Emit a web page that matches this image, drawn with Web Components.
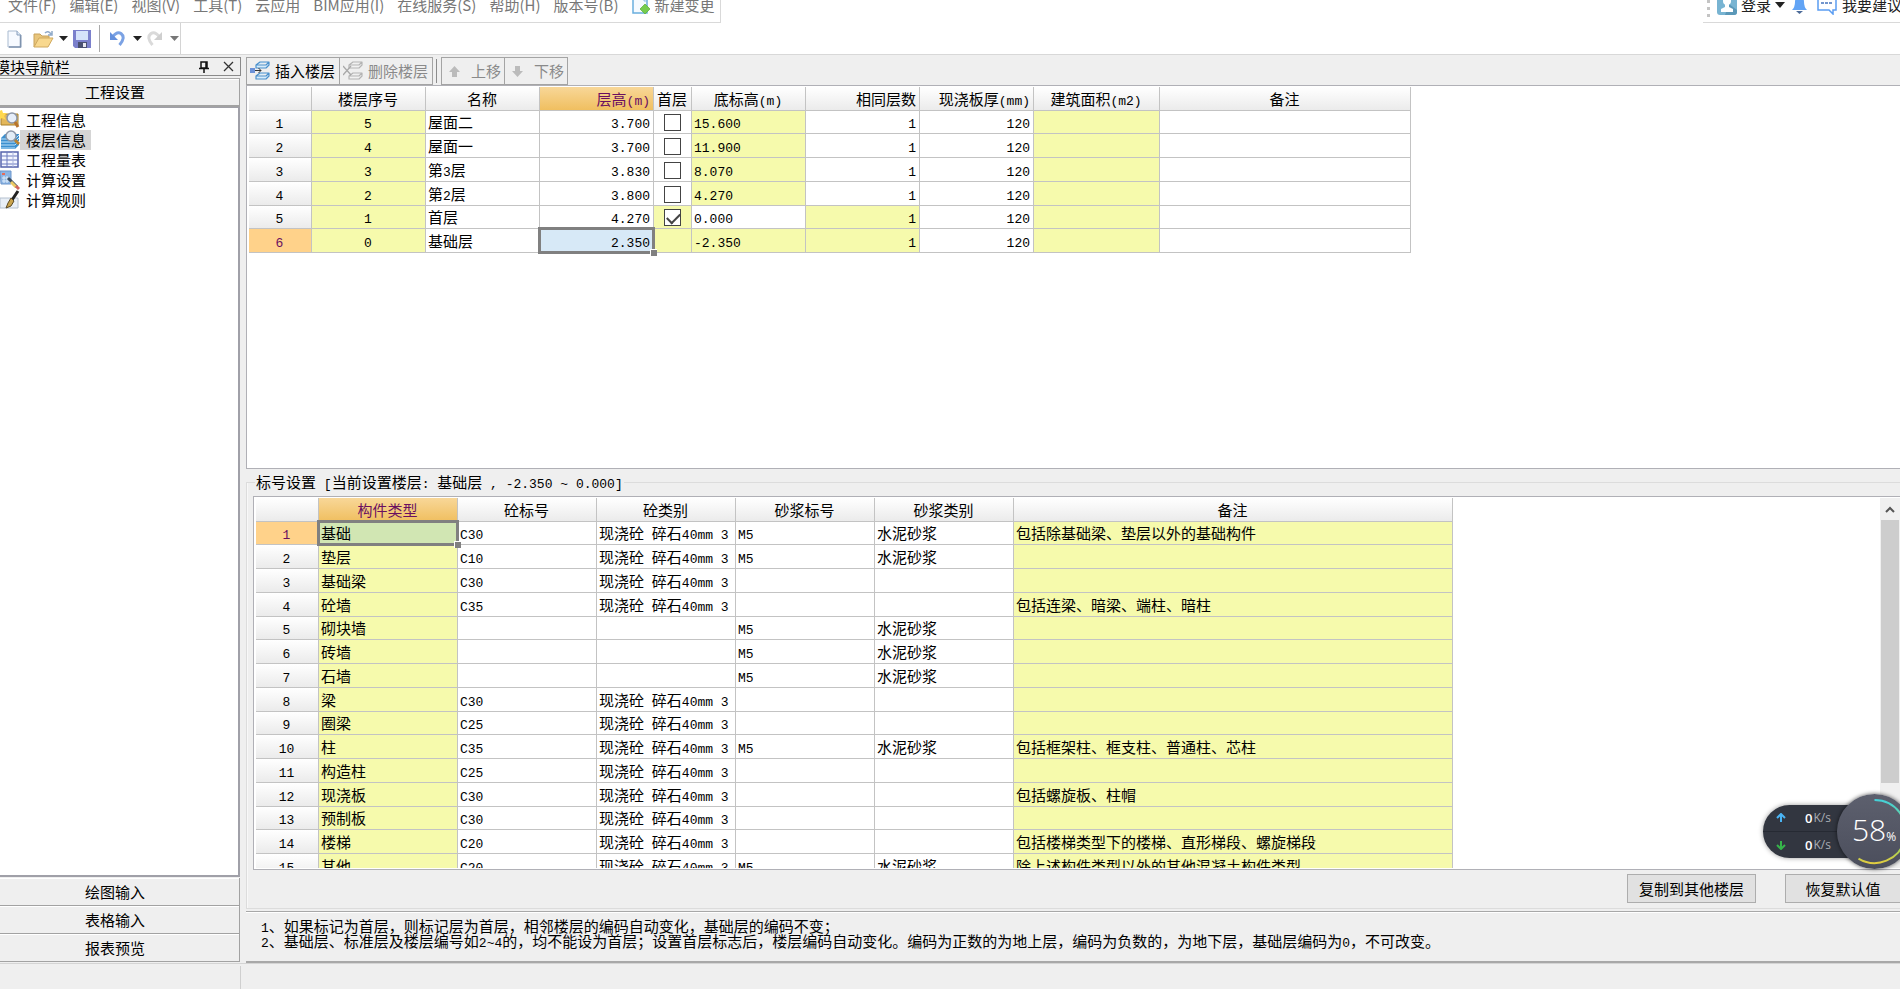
<!DOCTYPE html>
<html lang="zh-CN">
<head>
<meta charset="utf-8">
<title>楼层信息</title>
<style>
  html, body { margin: 0; height: 100%; }
  body {
    overflow: hidden; color: #000; background: #fff;
    font: 15px/20px "Noto Sans CJK SC", sans-serif;
  }
</style>
</head>
<body>
<app-window>
  <menu-bar slot="menu"></menu-bar>
  <quick-bar slot="quick"></quick-bar>
  <nav-panel slot="nav" heading="模块导航栏"></nav-panel>
  <floor-toolbar slot="tools"></floor-toolbar>
  <data-grid slot="floors" name="floors"></data-grid>
  <grade-panel slot="grades"><data-grid name="grades"></data-grid></grade-panel>
  <note-bar slot="notes">1、如果标记为首层，则标记层为首层，相邻楼层的编码自动变化，基础层的编码不变；
2、基础层、标准层及楼层编号如2~4的，均不能设为首层；设置首层标志后，楼层编码自动变化。编码为正数的为地上层，编码为负数的，为地下层，基础层编码为0，不可改变。</note-bar>
</app-window>
<net-monitor></net-monitor>

<script>
const ASCII = /[\x20-\x7e]+/g;
const mono = t => t.replace(ASCII, m => `<span class="n">${m}</span>`);
const BASE = `*{box-sizing:border-box}
  button{font:inherit;color:inherit;margin:0;padding:0;border:0;background:none;white-space:nowrap}
  svg{display:block;flex:none}
  .n{font-family:"Liberation Mono",monospace;font-size:13px;line-height:1;white-space:pre}`;

function define(name, render, after) {
  customElements.define(name, class extends HTMLElement {
    connectedCallback() {
      if (this.shadowRoot) return;
      const t = document.createElement('template');
      t.innerHTML = render(this);
      const root = this.attachShadow({ mode: 'open' });
      root.append(t.content.cloneNode(true));
      if (after) after(root, this);
    }
  });
}

define('app-window', () => `<style>${BASE}
  :host{display:flex;flex-direction:column;height:100vh;overflow:hidden}
  .body{flex:1;min-height:0;display:grid;grid-template-columns:241px minmax(0,1fr);column-gap:5px;background:#efefef;border-top:1px solid #d8d8d8;padding-top:2px}
  .work{display:grid;min-height:0;grid-template-rows:28px minmax(0,384fr) minmax(0,442fr) 52px}
  .status{height:26px;background:#efefef;border-top:1px solid #d4d4d4;display:flex;padding-left:240px}
  .status i{border-left:1px solid #cfcfcf;height:24px;margin-top:2px}
  </style>
  <slot name="menu"></slot><slot name="quick"></slot>
  <div class="body"><slot name="nav"></slot>
    <main class="work"><slot name="tools"></slot><slot name="floors"></slot><slot name="grades"></slot><slot name="notes"></slot></main>
  </div>
  <footer class="status"><i></i></footer>`);

define('menu-bar', () => `<style>${BASE}
  :host{display:flex;justify-content:space-between;height:23px}
  nav{display:flex;gap:13px;padding:0 7px 0 8px;border:1px solid #d9d9d9;border-width:0 1px 1px 0;color:#777;width:721px}
  button{height:20px;margin-top:-5px;display:flex;align-items:center}
  .new{gap:3px;margin-left:auto}
  .user{width:197px;padding-left:4px;border-bottom:1px solid #d9d9d9;display:flex;color:#222}
  .user button{flex:none}
  .grip{flex:none;border-left:3px dotted #c4c4c4;height:17px;margin-right:7px}
  .login{gap:4px}.bell{padding:0 9px 0 6px}.talk{gap:5px}
  </style>
  <nav>${['文件(F)','编辑(E)','视图(V)','工具(T)','云应用','BIM应用(I)','在线服务(S)','帮助(H)','版本号(B)'].map(x => `<button>${x}</button>`).join('')}
  <button class="new"><svg width="20" height="20" viewBox="0 0 20 20"><path d="M2 1h11l3 3v14H2z" fill="#f5faff" stroke="#6aaede" stroke-width="1.5"/><path d="M11 3h2v3h3" stroke="#8abde6" fill="none"/><path d="M14 9l5 5-5 5-5-5z" fill="#76cc4e" stroke="#5aae38" stroke-width=".7"/></svg>新建变更</button></nav>
  <div class="user"><i class="grip"></i>
  <button class="login"><svg width="20" height="20" viewBox="0 0 20 20"><rect width="20" height="20" rx="3" fill="#78b4d2"/><path d="M12 9l8 6v2q0 3-3 3H8z" fill="#5b98b8"/><circle cx="10" cy="6" r="4" fill="#fff"/><path d="M8 9h4v3l4 2v3H4v-3l4-2z" fill="#fff"/></svg>登录<svg width="10" height="6"><path d="M0 0h10L5 6z" fill="#222"/></svg></button>
  <button class="bell" aria-label="通知"><svg width="17" height="20" viewBox="0 0 17 20"><path d="M1 15q3-3 3-8c0-8 9-8 9 0q0 5 3 8z" fill="#62a4f5"/><path d="M5 16h7l-3.500 3z" fill="#4d6b98"/></svg></button>
  <button class="talk"><svg width="20" height="20" viewBox="0 0 20 20"><path d="M1 1h18v14h-3v4l-4-4H1z" fill="#fff" stroke="#5b9df2" stroke-width="1.500"/><path d="M4 8h12" stroke="#4674bd" stroke-width="1.500" stroke-dasharray="3 1"/></svg>我要建议</button></div>`);

const caret = c => `<svg width="9" height="6"><path d="M0 0h9L4.500 5z" fill="${c}"/></svg>`;
define('quick-bar', () => `<style>${BASE}
  :host{display:block;height:31px}
  div{display:flex;align-items:center;width:181px;height:31px;padding-left:7px;border-right:1px solid #d4d4d4}
  button{display:flex;align-items:center}
  .open{gap:5px;margin:0 5px 0 11px}.undo{gap:7px}.redo{gap:7px;margin-left:4px}
  i{height:27px;border-left:1px solid #aaa;margin:0 9px 0 8px}
  </style><div>
  <button aria-label="新建"><svg width="15" height="18" viewBox="0 0 15 18"><path d="M1 1h9l4 4v12H1z" fill="#f7faff" stroke="#a9bad0"/><path d="M13.500 5v12H2" stroke="#7f93ae" stroke-width="1.500" fill="none"/><path d="M10 1v4h4" fill="#dce7f4" stroke="#8aa0bd"/></svg></button>
  <button class="open" aria-label="打开"><svg width="21" height="18" viewBox="0 0 21 18"><path d="M1 17V4h6l2 2h7v5" fill="#e8c57b" stroke="#c8a25a"/><path d="M1 17L6 8h14l-5 9z" fill="#f8d88e" stroke="#d0a95e"/><path d="M12 3q3-3 6 1M19 1v4h-4" stroke="#8fa9c8" stroke-width="1.500" fill="none"/></svg>${caret('#222')}</button>
  <button aria-label="保存"><svg width="18" height="18" viewBox="0 0 18 18"><path d="M0 0h18v18H2l-2-2z" fill="#7b80cc"/><path d="M3 1h12v9H3z" fill="#d5e2fa"/><path d="M5 12h9v6H5z" fill="#4a5070"/><path d="M10 13h3v4h-3z" fill="#e8e8f0"/></svg></button><i></i>
  <button class="undo" aria-label="撤销"><svg width="17" height="17" viewBox="0 0 17 17"><path d="M3.500 7Q8 1 12 3.500q5 4-1.500 11.500" fill="none" stroke="#7ba2e4" stroke-width="3"/><path d="M1 2v8h8z" fill="#6590dc"/></svg>${caret('#222')}</button>
  <button class="redo" aria-label="重做"><svg width="17" height="17" viewBox="0 0 17 17"><path d="M13.500 7Q9 1 5 3.500q-5 4 1.500 11.500" fill="none" stroke="#dadada" stroke-width="3"/><path d="M16 2v8H8z" fill="#cfcfcf"/></svg>${caret('#777')}</button></div>`);

const NAV = [
  ['工程信息', '<path d="M1 4h17v11H1z" fill="#e3b75a" stroke="#a8802c"/><path d="M2 0l1 3 4 0-3 3 2 4-4-2-3 2V1z" fill="#ffd84e"/><circle cx="12" cy="8" r="5" fill="#e6eefa" stroke="#8c96a8" stroke-width="1.500"/><path d="M15 12l3 5" stroke="#b8742c" stroke-width="3"/>'],
  ['楼层信息', '<path d="M1 8l4-4h14v11l-4 4H1z" fill="#3b8fcf"/><path d="M1 9h14l4-4M1 12h14l4-4M1 15h14l4-4M1 18h14" stroke="#bfe2fa" fill="none"/><circle cx="11" cy="6" r="5" fill="#e3edf7" stroke="#8c96a8" stroke-width="1.500"/><path d="M15 10l4 4" stroke="#b98232" stroke-width="3"/>'],
  ['工程量表', '<path d="M1 2h17v15H1z" fill="#f4f6ff" stroke="#5563ac" stroke-width="1.500"/><path d="M1 6h17M1 10h17M1 14h17M7 2v15" stroke="#6a78bd"/><path d="M13 2v15" stroke="#a9b3dd"/>'],
  ['计算设置', '<path d="M0 1h11v13H1z" fill="#8cb5e4" stroke="#6d96cc"/><path d="M2 3h3v2H2z" fill="#e86b58"/><path d="M2 8h8M2 11h8M4 6v7M7 6v7" stroke="#dcebfa"/><path d="M8 8l9 9" stroke="#3d4d60" stroke-width="3"/><path d="M11 12l5 5" stroke="#ecc964" stroke-width="3"/><path d="M16 16l3 3" stroke="#d0655d" stroke-width="3"/>'],
  ['计算规则', '<path d="M0 8h18v10H0z" fill="#e9eff6" stroke="#b4c0ce"/><path d="M18 1l-6 9" stroke="#222" stroke-width="3"/><path d="M11 8l3 3-3 5-5 2 2-5z" fill="#c9a34c" stroke="#5b4a26"/>']
];
define('nav-panel', el => `<style>${BASE}
  :host{display:flex;flex-direction:column;min-height:0;overflow:hidden;padding-bottom:1px}
  header{height:19px;flex:none;display:flex;align-items:center;border:1px solid #8a8a8a;border-left:0;line-height:17px}
  header span{margin-left:-5px;flex:1}
  header button{margin-right:5px}header button+button{margin:0 5px 0 9px}
  .sec{display:block;flex:none;width:240px;height:28px;padding-right:9px;border:solid #a2a2a2;border-width:0 1px 1px 0;text-align:center;box-shadow:inset 0 1px #fff}
  .top{height:29px;margin-top:2px;border-bottom-width:2px;border-top:1px solid #aaa}
  ul{flex:1;min-height:0;width:240px;margin:0 0 1px;padding:2px 0 0;list-style:none;background:#fff;border:solid #a0a0a8;border-width:1px 2px 2px 0}
  li{height:20px}
  li button{display:flex;align-items:center;height:20px}
  li span{padding:0 5px 0 6px;line-height:20px}
  .on span{background:#d5d5d5}
  </style>
  <header><span>${el.getAttribute('heading')}</span>
  <button aria-label="固定"><svg width="10" height="14"><path d="M2 2h6v6H2zM0 8.500h10M5 9v4M7 2v6" fill="none" stroke="#111" stroke-width="1.500"/></svg></button>
  <button aria-label="关闭"><svg width="12" height="12"><path d="M1 1l9 9M10 1l-9 9" stroke="#333" stroke-width="1.300"/></svg></button></header>
  <button class="sec top">工程设置</button>
  <ul>${NAV.map(([t, p], i) => `<li><button class="${i === 1 ? 'on' : ''}"><svg width="20" height="20" viewBox="0 0 20 20">${p}</svg><span>${t}</span></button></li>`).join('')}</ul>
  ${['绘图输入','表格输入','报表预览'].map(t => `<button class="sec">${t}</button>`).join('')}`);

const layers = (c, f, x) => `<svg width="20" height="20" viewBox="0 0 20 20"><g fill="none" stroke="${c}" stroke-width="1.200" stroke-linejoin="round"><path d="M6 4l4-3h9l-3 3zM6 4v3h10l3-3V1" fill="${f}"/><path d="M6 15l4-3h9l-3 3zM6 15v3h10l3-3v-3" fill="${f}"/></g>${x}</svg>`;
define('floor-toolbar', () => `<style>${BASE}
  :host{display:flex;align-items:flex-start;height:28px}
  button{height:28px;display:flex;align-items:center;border:1px solid #a4a4a4;padding:0 3px 0 3px}
  button+button{margin-left:-1px}
  button:disabled{color:#8a8a8a}
  .w{gap:5px;width:94px}.m{justify-content:space-between;width:64px;padding-left:6px}
  i{border-left:1px solid #8c8c8c;height:24px;margin:2px 4px 0 3px}
  </style>
  <button class="w">${layers('#4a90cc', '#d6ecfb', '<path d="M0 7h5v5H0z" fill="#6c92d8"/><path d="M5 9.500h6M8.500 7l2.500 2.500L8.500 12" stroke="#333" fill="none"/>')}插入楼层</button>
  <button class="w" disabled>${layers('#b4b4b4', '#f2f2f2', '<path d="M0 5l8 9M8 5l-8 9" stroke="#a8a8a8" stroke-width="1.300"/>')}删除楼层</button><i></i>
  <button class="m" disabled><svg width="13" height="13"><path d="M6.500 1l5.500 6H9v5H4V7H1z" fill="#bbb"/></svg>上移</button>
  <button class="m" disabled><svg width="13" height="13"><path d="M6.500 12L12 6H9V1H4v5H1z" fill="#bbb"/></svg>下移</button>`);

/* Column: [title, width, alignment, header alignment]. A cell starting with "*" is read-only (yellow). */
const MIX = '现浇砼 碎石40mm 3', MORTAR = '水泥砂浆';
const GRIDS = {
  floors: {
    label: '楼层信息', hot: [5, 2],
    cols: [['楼层序号',114,'c'],['名称',114,'l'],['层高(m)',114,'r','r'],['首层',38,'c'],['底标高(m)',114,'l'],['相同层数',114,'r','r'],['现浇板厚(mm)',114,'r','r'],['建筑面积(m2)',126,'l'],['备注',251,'l']],
    rows: [
      ['*5','屋面二','3.700','[ ]','*15.600','1','120','*',''],
      ['*4','屋面一','3.700','[ ]','*11.900','1','120','*',''],
      ['*3','第3层','3.830','[ ]','*8.070','1','120','*',''],
      ['*2','第2层','3.800','[ ]','*4.270','1','120','*',''],
      ['*1','首层','4.270','*[x]','0.000','*1','120','*',''],
      ['*0','基础层','2.350','*','*-2.350','*1','120','*','']
    ]
  },
  grades: {
    label: '标号设置', hot: [0, 0], scroll: true,
    cols: [['构件类型',139,'l'],['砼标号',139,'l'],['砼类别',139,'l'],['砂浆标号',139,'l'],['砂浆类别',139,'l'],['备注',439,'l']],
    rows: [
      ['基础','C30',1,1,'包括除基础梁、垫层以外的基础构件'],['垫层','C10',1,1,''],['基础梁','C30',1,0,''],
      ['砼墙','C35',1,0,'包括连梁、暗梁、端柱、暗柱'],['砌块墙','',0,1,''],['砖墙','',0,1,''],['石墙','',0,1,''],
      ['梁','C30',1,0,''],['圈梁','C25',1,0,''],['柱','C35',1,1,'包括框架柱、框支柱、普通柱、芯柱'],
      ['构造柱','C25',1,0,''],['现浇板','C30',1,0,'包括螺旋板、柱帽'],['预制板','C30',1,0,''],
      ['楼梯','C20',1,0,'包括楼梯类型下的楼梯、直形梯段、螺旋梯段'],['其他','C20',1,1,'除上述构件类型以外的其他混凝土构件类型']
    ].map(([n, g, a, b, r]) => ['*' + n, g, a ? MIX : '', b ? 'M5' : '', b ? MORTAR : '', '*' + r])
  }
};
define('data-grid', el => {
  const g = GRIDS[el.getAttribute('name')], [hr, hc] = g.hot;
  const cell = (v, r, c) => {
    const ro = v[0] === '*', t = ro ? v.slice(1) : v;
    const cls = [g.cols[c][2], ro ? 'ro' : '', r === hr && c === hc ? 'sel' : ''].join(' ');
    const body = /^\[.\]$/.test(t) ? `<input type="checkbox" aria-label="首层 ${r + 1}"${t === '[x]' ? ' checked' : ''}>` : mono(t);
    return `<td class="${cls}">${body}</td>`;
  };
  const width = g.cols.reduce((s, c) => s + c[1], 63);
  return `<style>${BASE}
  :host{display:flex;min-height:0;min-width:0;background:#fff;border:solid #b0b0b6;border-width:1px 0 1px 1px;padding:1px 0 1px 2px}
  .view{flex:1;min-width:0;overflow:hidden}
  table{border-collapse:separate;border-spacing:0;table-layout:fixed;width:${width}px}
  th,td{padding:0 3px 0 2px;height:24px;line-height:20px;border:solid #c3c3c3;border-width:0 1px 1px 0;font-weight:400;white-space:nowrap;text-align:left}
  tbody tr:nth-child(4n+1)>*{height:23px}
  th{background:linear-gradient(#fff,#ebebeb);text-align:center}
  .r{text-align:right}.c{text-align:center}
  .ro{background:#f6faac}
  thead .hot{background:linear-gradient(#f8d798,#f0bf60);color:#6a0f60}
  tbody .hot{background:#ffd28a;color:#6a0f60}
  .sel{position:relative;background:#d7e9f7}.sel.ro{background:#d1e6b3}
  .sel::before{content:"";position:absolute;inset:-2px;border:3px solid #808080}
  .sel::after{content:"";position:absolute;right:-4px;bottom:-4px;width:6px;height:6px;background:#808080;border:solid #fff;border-width:1px 0 0 1px}
  input{appearance:none;display:block;width:17px;height:17px;margin:1px auto 0;border:1px solid #444;background:#fff}
  input:checked::after{content:"";display:block;width:11px;height:6px;margin:3px 0 0 2px;border:solid #444;border-width:0 0 2px 2px;transform:rotate(-45deg)}
  .bar{width:20px;background:#f0f0f0;display:flex;flex-direction:column;align-items:center}
  .bar svg{margin:8px 0 7px}.bar i{width:18px;height:71%;background:#cdcdcd}
  </style>
  <div class="view"><table aria-label="${g.label}"><colgroup><col style="width:63px">${g.cols.map(c => `<col style="width:${c[1]}px">`).join('')}</colgroup>
  <thead><tr><th></th>${g.cols.map((c, i) => `<th class="${c[3] || ''} ${i === hc ? 'hot' : ''}">${mono(c[0])}</th>`).join('')}</tr></thead>
  <tbody>${g.rows.map((r, i) => `<tr><th class="${i === hr ? 'hot' : ''}">${mono(String(i + 1))}</th>${r.map((v, c) => cell(v, i, c)).join('')}</tr>`).join('')}</tbody></table></div>
  ${g.scroll ? '<div class="bar"><svg width="10" height="7"><path d="M1 6l4-4 4 4" fill="none" stroke="#555" stroke-width="2"/></svg><i></i></div>' : ''}`;
});

define('grade-panel', () => `<style>${BASE}
  :host{display:flex;min-height:0;min-width:0;padding:3px 0 2px}
  fieldset{flex:1;min-width:0;display:flex;flex-direction:column;margin:0;padding:0 0 0 6px;border:1px solid #dcdcdc;border-right:0;box-shadow:inset 1px 0 #f8f8f8}
  legend{padding:0 1px;margin:0 0 4px 2px;line-height:20px;white-space:pre}
  ::slotted(data-grid){flex:1}
  .acts{flex:none;display:flex;justify-content:flex-end;gap:29px;height:38px;padding-top:4px}
  .acts button{width:129px;height:29px;border:1px solid #adadad;background:#e1e1e1}
  .acts button+button{width:115px;border-right:0}
  </style>
  <fieldset><legend>${mono('标号设置 [当前设置楼层: 基础层 , -2.350 ~ 0.000]')}</legend><slot></slot>
  <div class="acts"><button>复制到其他楼层</button><button>恢复默认值</button></div></fieldset>`);

define('note-bar', el => `<style>${BASE}
  :host{display:block;border:solid #a8a8a8;border-width:1px 0 2px;box-shadow:inset 0 1px #fff;padding:6px 0 0 15px;overflow:hidden}
  p{margin:0;height:15px;line-height:15px;white-space:nowrap}
  </style>${el.textContent.trim().split('\n').map(l => `<p>${mono(l)}</p>`).join('')}`);

define('net-monitor', () => `<style>${BASE}
  :host{position:absolute;right:-12px;bottom:120px;width:149px;height:76px;display:flex;align-items:center;font-family:"Open Sans",sans-serif;color:#fff}
  .pill{width:100px;height:53px;border-radius:27px 0 0 27px;background:#323640;box-shadow:0 0 5px #0006;display:grid;grid-template-rows:1fr 1fr}
  .pill div{display:flex;align-items:center;padding-left:13px}
  .pill div+div{border-top:1px solid #262a33}
  b{font-size:13px;font-weight:600;margin-left:19px}
  small{font-size:12px;color:#a9acb4;margin-left:1px}
  .dial{position:relative;margin-left:-25px;width:75px;height:75px;flex:none;border-radius:50%;background:linear-gradient(#5d606e,#4b4e5c);box-shadow:0 0 4px #000a;display:flex;align-items:baseline;padding:16px 0 0 15px;line-height:40px}
  .dial svg{position:absolute;inset:0}
  strong{font:300 30px/40px "Open Sans",sans-serif}
  em{font:normal 12px/16px "Open Sans",sans-serif}
  </style>
  <div class="pill"><div><svg width="10" height="10"><path d="M5 9V2M1 5l4-4 4 4" fill="none" stroke="#4ab4f4" stroke-width="2"/></svg><b>0</b><small>K/s</small></div>
  <div><svg width="10" height="10"><path d="M5 1v7M1 5l4 4 4-4" fill="none" stroke="#36b44a" stroke-width="2"/></svg><b>0</b><small>K/s</small></div></div>
  <div class="dial"><svg width="75" height="75" viewBox="0 0 75 75"><defs><linearGradient id="g" x1="0" y1="0" x2="0" y2="1"><stop stop-color="#45d0d8"/><stop offset=".7" stop-color="#8fd460"/><stop offset="1" stop-color="#e0cc40"/></linearGradient></defs><path d="M37.500 6a31.500 31.500 0 1 1-16 58.600" fill="none" stroke="url(#g)" stroke-width="2"/></svg><strong>58</strong><em>%</em></div>`);
</script>
</body>
</html>
